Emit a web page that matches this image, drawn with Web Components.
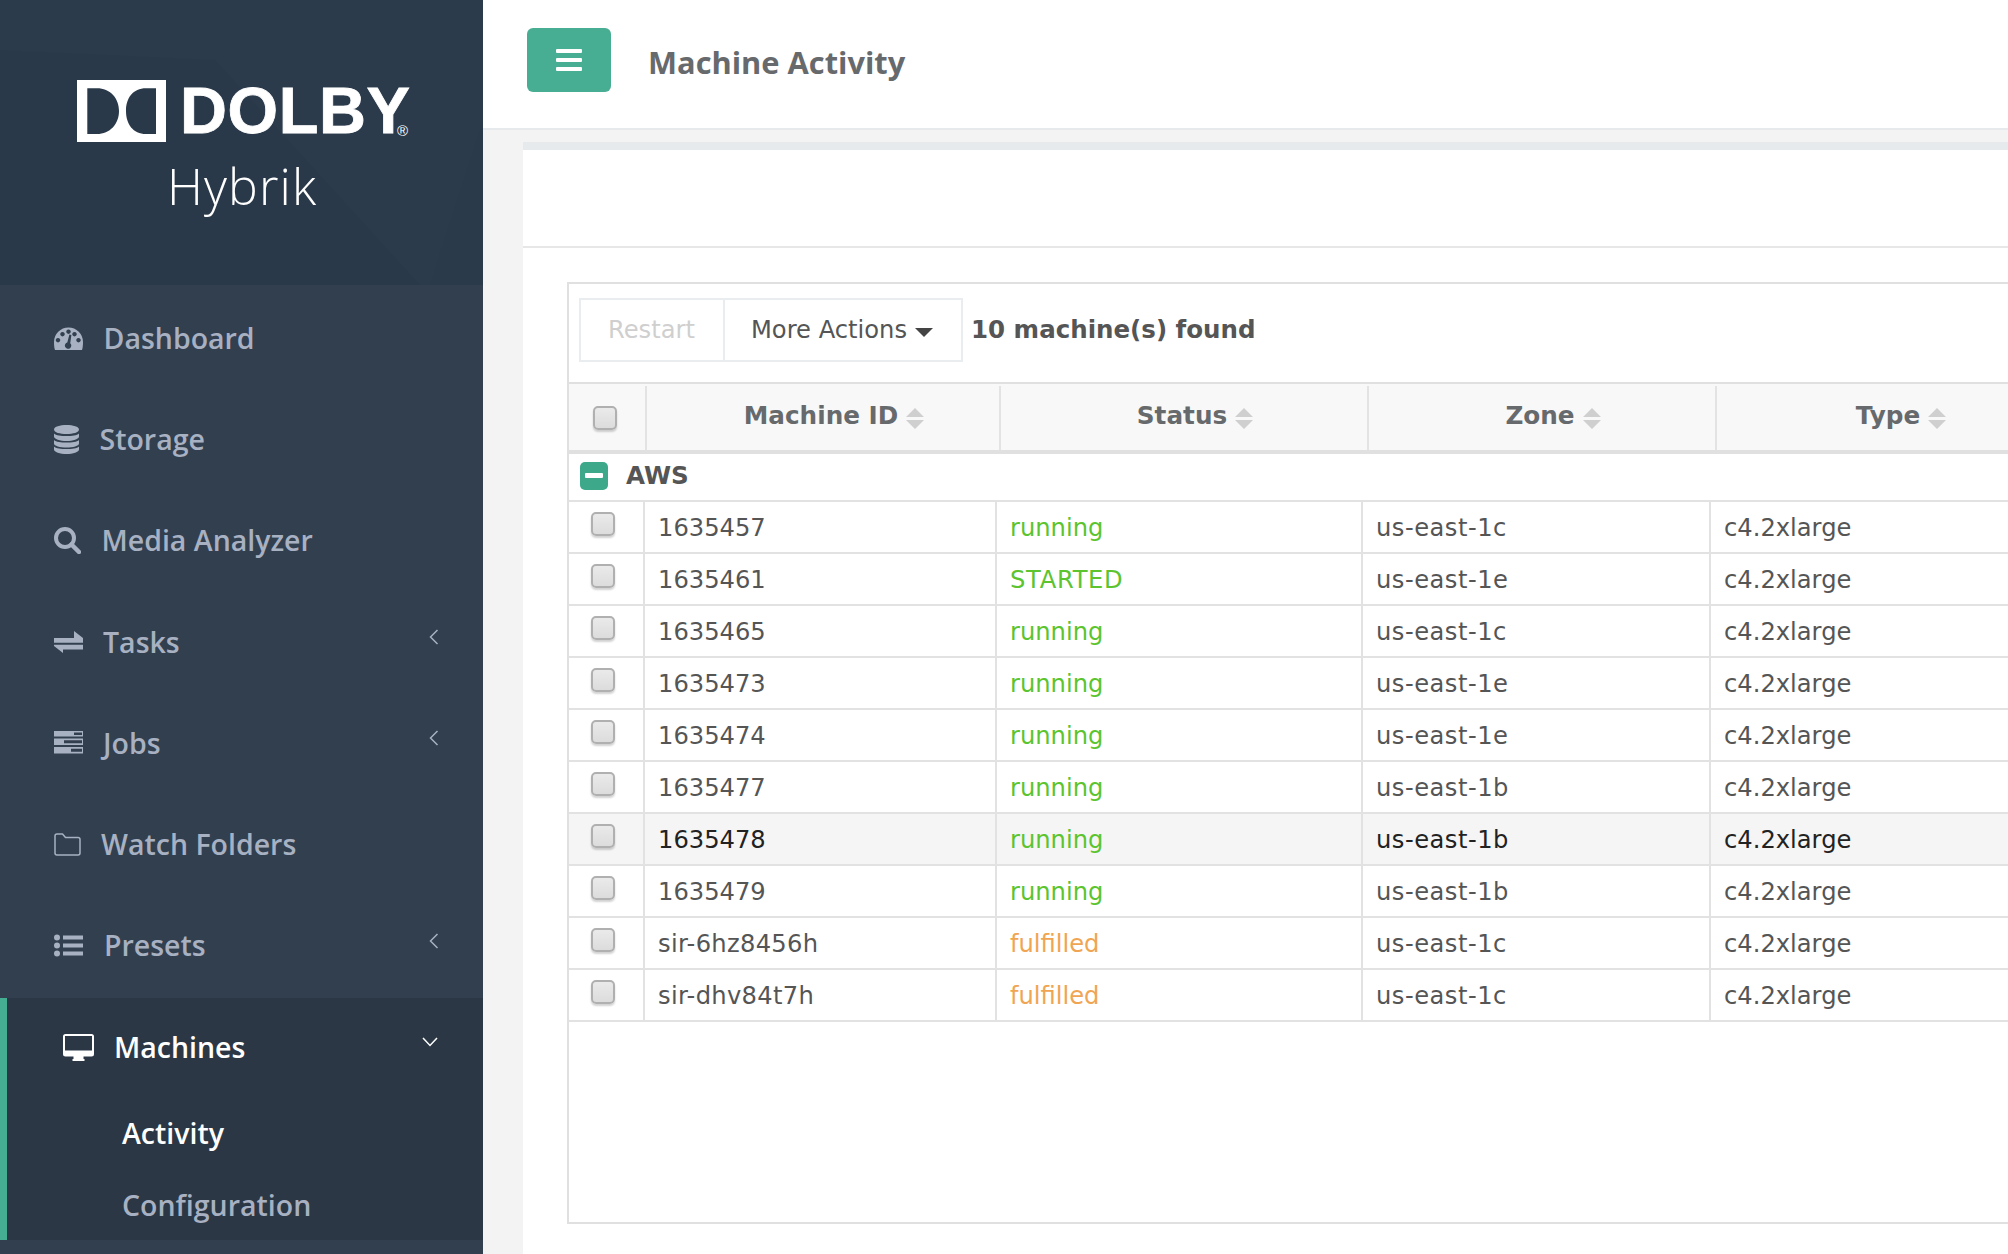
<!DOCTYPE html>
<html>
<head>
<meta charset="utf-8">
<title>Machine Activity</title>
<style>
  html, body { margin: 0; height: 1254px; overflow: hidden; }
  body { display: flex; background: #f3f3f4; font-family: "Open Sans", sans-serif; }
</style>
</head>
<body>
<hy-sidebar>
  <hy-nav-item icon="dashboard" tx="49.500" label="Dashboard"></hy-nav-item>
  <hy-nav-item icon="database" tx="45.500" label="Storage"></hy-nav-item>
  <hy-nav-item icon="search" tx="47.500" label="Media Analyzer"></hy-nav-item>
  <hy-nav-item icon="exchange" tx="49" label="Tasks" chevron></hy-nav-item>
  <hy-nav-item icon="server" tx="49" label="Jobs" chevron></hy-nav-item>
  <hy-nav-item icon="folder" tx="47" label="Watch Folders"></hy-nav-item>
  <hy-nav-item icon="list" tx="50" label="Presets" chevron></hy-nav-item>
  <hy-nav-group label="Machines">
    <hy-sub-item active>Activity</hy-sub-item>
    <hy-sub-item>Configuration</hy-sub-item>
  </hy-nav-group>
</hy-sidebar>
<hy-main>
  <hy-topbar title="Machine Activity"></hy-topbar>
  <hy-panel>
    <hy-machine-table></hy-machine-table>
  </hy-panel>
</hy-main>

<script>
const ICONS = {
  dashboard: '<svg width="29" height="23" viewBox="0 0 29 23"><path fill-rule="evenodd" fill="currentColor" d="M1 23C.3 21 0 18.500 0 15A14.500 14.500 0 0 1 29 15C29 18.500 28.700 21 28 23ZM4 11a2.200 2.200 0 1 0 .01 0ZM8.500 5a2.200 2.200 0 1 0 .01 0ZM14.500 2.500a2.200 2.200 0 1 0 .01 0ZM24.500 11a2.200 2.200 0 1 0 .01 0ZM20.500 5a2.200 2.200 0 1 0 .01 0ZM15.400 7.500L13.300 15.500A3.200 3.200 0 1 0 16.200 16.200L17.400 8Z"/></svg>',
  database: '<svg width="25" height="29" viewBox="0 0 25 29"><path fill="currentColor" d="M0 4.500C0 1.500 6 0 12.500 0S25 1.500 25 4.500 19 9 12.500 9 0 7.500 0 4.500ZM0 8.500V11.500C0 14 6 16 12.500 16S25 14 25 11.500V8.500C23 10.500 18 11 12.500 11S2 10.500 0 8.500ZM0 15V18.500C0 21 6 22.500 12.500 22.500S25 21 25 18.500V15C23 17 18 17.500 12.500 17.500S2 17 0 15ZM0 21.500V24.500C0 27 6 29 12.500 29S25 27 25 24.500V21.500C23 23.500 18 24 12.500 24S2 23.500 0 21.500Z"/></svg>',
  search: '<svg width="27" height="27" viewBox="0 0 27 27"><circle cx="11" cy="11" r="9" fill="none" stroke="currentColor" stroke-width="4"/><path d="M17.500 17.500L25 25" stroke="currentColor" stroke-width="4.500" stroke-linecap="round"/></svg>',
  exchange: '<svg width="29" height="22" viewBox="0 0 29 22"><path fill="currentColor" d="M0 7H20V0L29 7V11.700H0ZM0 13.700H29V18.400H9V22L0 15Z"/></svg>',
  server: '<svg width="29" height="23" viewBox="0 0 29 23"><path fill-rule="evenodd" fill="currentColor" d="M0 0H29V5.500H0ZM20 1.400V4H28V1.400ZM0 7.500H29V14H0ZM10 9.300V12.300H28V9.300ZM0 16H29V22.500H0ZM17 17.700V20.700H28V17.700Z"/></svg>',
  folder: '<svg width="27" height="23" viewBox="0 0 27 23"><path fill="none" stroke="currentColor" stroke-width="1.500" stroke-linejoin="round" d="M3 1H8.500L11.500 4.500H24A2 2 0 0 1 26 6.500V20A2 2 0 0 1 24 22H3A2 2 0 0 1 1 20V3A2 2 0 0 1 3 1Z"/></svg>',
  list: '<svg width="29" height="23" viewBox="0 0 29 23"><g fill="currentColor"><circle cx="3" cy="3.500" r="3"/><circle cx="3" cy="11.500" r="3"/><circle cx="3" cy="19.500" r="3"/><rect x="9" y="1.500" width="20" height="4"/><rect x="9" y="9.500" width="20" height="4"/><rect x="9" y="17.500" width="20" height="4"/></g></svg>',
  desktop: '<svg width="31" height="27" viewBox="0 0 31 27"><path fill-rule="evenodd" fill="currentColor" d="M2.500 0H28.500A2.500 2.500 0 0 1 31 2.500V20A2.500 2.500 0 0 1 28.500 22.500H20.500V25H21.500V27H9.500V25H10.500V22.500H2.500A2.500 2.500 0 0 1 0 20V2.500A2.500 2.500 0 0 1 2.500 0ZM2 2V16.500H29V2Z"/></svg>'
};

class HySidebar extends HTMLElement {
  constructor() {
    super();
    this.attachShadow({ mode: "open" });
    this.shadowRoot.innerHTML = `
<style>
  :host { display: flex; flex-direction: column; width: 483px; height: 1254px; flex: none; background: #323f4f; }
  .brand { position: relative; height: 285px; flex: none; background: #2c3b4c; overflow: hidden; color: #fff; display: flex; flex-direction: column; }
  .bg { position: absolute; inset: 0; }
  .logo { position: relative; display: flex; align-items: center; margin: 80px 0 0 77px; height: 62px; }
  .word { font: 700 65px/62px "Liberation Sans", sans-serif; margin-left: 14px; letter-spacing: .6px; -webkit-text-stroke: .8px #fff; }
  .reg { position: absolute; left: 320px; top: 43px; font: 400 15px/16px "Liberation Sans", sans-serif; }
  .sub { position: relative; font: 350 50px/60px "Open Sans", sans-serif; letter-spacing: 1.100px; margin: 14px 0 0 167px; }
  nav { display: flex; flex-direction: column; }
</style>
<div class="brand">
  <svg class="bg" width="483" height="285" viewBox="0 0 483 285"><path fill="#29384a" d="M0 50L215 60L420 285H0Z" opacity=".45"/><path fill="#2a3949" d="M483 120L430 285H483Z" opacity=".5"/></svg>
  <div class="logo">
    <svg width="89" height="62" viewBox="0 0 89 62"><path fill="#fff" fill-rule="evenodd" d="M0 0H89V62H0ZM10.300 8.300V54H20C33 54 42 44 42 31S33 8.300 20 8.300ZM79 8.300H69C56 8.300 49 18 49 31S56 54 69 54H79Z"/></svg>
    <span class="word">DOLBY</span>
    <span class="reg">®</span>
  </div>
  <div class="sub">Hybrik</div>
</div>
<nav><slot></slot></nav>`;
  }
}

class HyNavItem extends HTMLElement {
  constructor() {
    super();
    this.attachShadow({ mode: "open" });
    const icon = ICONS[this.getAttribute("icon")];
    const chev = this.hasAttribute("chevron")
      ? '<svg class="chev" width="10" height="16" viewBox="0 0 10 16"><path d="M8.500 1L1.500 8L8.500 15" fill="none" stroke="currentColor" stroke-width="1.500"/></svg>'
      : "";
    this.shadowRoot.innerHTML = `
<style>
  :host { display: flex; align-items: center; height: 101.200px; box-sizing: border-box; padding: 5px 44px 0 54px; color: #a7b1c2; font: 600 28.500px/36px "Open Sans", sans-serif; }
  .ic { width: ${this.getAttribute("tx")}px; flex: none; display: flex; align-items: center; }
  .chev { margin-left: auto; margin-bottom: 9px; }
</style>
<span class="ic">${icon}</span><span>${this.getAttribute("label")}</span>${chev}`;
  }
}

class HyNavGroup extends HTMLElement {
  constructor() {
    super();
    this.attachShadow({ mode: "open" });
    this.shadowRoot.innerHTML = `
<style>
  :host { display: block; height: 242px; margin-top: 5px; box-sizing: border-box; background: #2b3745; border-left: 7px solid #45ae92; color: #fff; font: 600 28.500px/36px "Open Sans", sans-serif; }
  .head { display: flex; align-items: center; height: 99px; box-sizing: border-box; padding: 0 45px 1px 56px; }
  .ic { width: 51px; flex: none; display: flex; }
  .chev { margin-left: auto; margin-bottom: 10px; }
</style>
<div class="head">
  <span class="ic">${ICONS.desktop}</span><span>${this.getAttribute("label")}</span>
  <svg class="chev" width="16" height="10" viewBox="0 0 16 10"><path d="M1 1L8 8.500L15 1" fill="none" stroke="currentColor" stroke-width="1.500"/></svg>
</div>
<slot></slot>`;
  }
}

class HySubItem extends HTMLElement {
  constructor() {
    super();
    this.attachShadow({ mode: "open" });
    this.shadowRoot.innerHTML = `
<style>
  :host { display: flex; align-items: center; height: 71.500px; padding-left: 115px; color: #a7b1c2; }
  :host([active]) { color: #fff; }
</style>
<slot></slot>`;
  }
}

class HyMain extends HTMLElement {
  constructor() {
    super();
    this.attachShadow({ mode: "open" });
    this.shadowRoot.innerHTML = `
<style>
  :host { display: flex; flex-direction: column; flex: 1; min-width: 0; height: 1254px; overflow: hidden; }
</style>
<slot></slot>`;
  }
}

class HyTopbar extends HTMLElement {
  constructor() {
    super();
    this.attachShadow({ mode: "open" });
    this.shadowRoot.innerHTML = `
<style>
  :host { display: flex; align-items: center; height: 130px; box-sizing: border-box; flex: none; background: #fff; border-bottom: 2px solid #e7eaec; padding: 0 0 8px 44px; }
  .toggle { width: 84px; height: 64px; border-radius: 6px; background: #48ae93; display: flex; flex-direction: column; align-items: center; justify-content: center; gap: 5px; }
  .toggle i { display: block; width: 26px; height: 4px; border-radius: 1px; background: #fff; }
  h2 { margin: 3px 0 0 37px; color: #676a6c; font: 700 30.800px/40px "Open Sans", sans-serif; }
</style>
<div class="toggle"><i></i><i></i><i></i></div>
<h2>${this.getAttribute("title")}</h2>`;
  }
}

class HyPanel extends HTMLElement {
  constructor() {
    super();
    this.attachShadow({ mode: "open" });
    this.shadowRoot.innerHTML = `
<style>
  :host { display: block; flex: 1; margin: 12px 0 0 40px; background: #fff; border-top: 8px solid #e7eaec; }
  .head { height: 96px; border-bottom: 2px solid #e7e7e7; }
  .body { padding: 34px 0 0 44px; }
</style>
<div class="head"></div>
<div class="body"><slot></slot></div>`;
  }
}

class HyCheckbox extends HTMLElement {
  constructor() {
    super();
    this.attachShadow({ mode: "open" });
    this.shadowRoot.innerHTML = `
<style>
  :host { display: block; width: 24px; height: 24px; box-sizing: border-box; border: 2px solid #b0b0b0; border-radius: 5px; background: linear-gradient(#eaeaea, #dcdcdc); box-shadow: 0 2px 2px rgba(0,0,0,.18); }
</style>`;
  }
}

class HySortHead extends HTMLElement {
  constructor() {
    super();
    this.attachShadow({ mode: "open" });
    this.shadowRoot.innerHTML = `
<style>
  :host { display: flex; align-items: center; justify-content: center; box-sizing: border-box; margin-top: 2px; padding: 0 0 4px 22px; border-right: 2px solid #e3e3e3; }
  svg { margin-left: 8px; margin-top: 4px; }
</style>
<slot></slot>
<svg width="18" height="21" viewBox="0 0 18 21"><path fill="#cfcfcf" d="M9 0L18 9H0ZM0 12H18L9 21Z"/></svg>`;
  }
}

class HyMachineRow extends HTMLElement {
  constructor() {
    super();
    this.attachShadow({ mode: "open" });
    const status = this.getAttribute("status");
    const mid = this.getAttribute("mid");
    const tone = status === "fulfilled" ? "#f0a552" : "#5bc42f";
    // Verdana runs a bit wider than DejaVu on these
    const statusTrack = status === "STARTED" ? ".7px" : "0";
    const midTrack = mid.startsWith("sir") ? ".3px" : "0";
    this.shadowRoot.innerHTML = `
<style>
  :host { display: grid; grid-template-columns: 76px 352px 366px 348px 600px; height: 52px; box-sizing: border-box; border-bottom: 2px solid #e2e2e2; color: #555; }
  :host([hover]) { background: #f5f5f5; color: #222; }
  .c { display: flex; align-items: center; padding: 2px 0 0 13px; box-sizing: border-box; border-right: 2px solid #e2e2e2; line-height: 48px; }
  .chk { padding: 10px 0 0 22px; align-items: flex-start; }
  .status { color: ${tone}; letter-spacing: ${statusTrack}; }
  .mid { letter-spacing: ${midTrack}; }
  .zone { letter-spacing: .5px; }
</style>
<div class="c chk"><hy-checkbox></hy-checkbox></div>
<div class="c mid">${mid}</div>
<div class="c status">${status}</div>
<div class="c zone">${this.getAttribute("zone")}</div>
<div class="c" style="border:0">${this.getAttribute("type")}</div>`;
  }
}

class HyMachineTable extends HTMLElement {
  constructor() {
    super();
    this.attachShadow({ mode: "open" });
    const machines = [
      ["1635457", "running", "us-east-1c"],
      ["1635461", "STARTED", "us-east-1e"],
      ["1635465", "running", "us-east-1c"],
      ["1635473", "running", "us-east-1e"],
      ["1635474", "running", "us-east-1e"],
      ["1635477", "running", "us-east-1b"],
      ["1635478", "running", "us-east-1b", true],
      ["1635479", "running", "us-east-1b"],
      ["sir-6hz8456h", "fulfilled", "us-east-1c"],
      ["sir-dhv84t7h", "fulfilled", "us-east-1c"]
    ];
    const rows = machines.map(m =>
      `<hy-machine-row mid="${m[0]}" status="${m[1]}" zone="${m[2]}" type="c4.2xlarge"${m[3] ? " hover" : ""}></hy-machine-row>`
    ).join("");
    this.shadowRoot.innerHTML = `
<style>
  :host { display: block; width: 1800px; height: 942px; box-sizing: border-box; border: 2px solid #e0e0e0; font: 400 24.200px/32px "DejaVu Sans", Verdana, sans-serif; color: #555; }
  .bar { display: flex; align-items: center; height: 98px; box-sizing: border-box; padding: 14px 0 20px 10px; }
  .group { display: flex; height: 64px; box-sizing: border-box; border: 2px solid #eaedef; }
  .group div { display: flex; align-items: center; box-sizing: border-box; }
  .restart { width: 144px; padding-left: 27px; color: #cfcfcf; border-right: 2px solid #eaedef; }
  .more { width: 236px; padding-left: 26px; color: #555; }
  .caret { width: 0; height: 0; margin: 4px 0 0 8px; border: 9px solid transparent; border-top-color: #444; border-bottom: 0; }
  .found { margin-left: 8px; font-size: 24.500px; font-weight: 700; color: #555; }
  .head { display: grid; grid-template-columns: 78px 354px 368px 348px 348px 300px; height: 72px; box-sizing: border-box; border-top: 2px solid #e0e0e0; border-bottom: 4px solid #e0e0e0; background: #f8f8f8; font-size: 24.700px; font-weight: 700; color: #676a6c; }
  .hchk { padding: 20px 0 0 24px; margin-top: 2px; border-right: 2px solid #e3e3e3; box-sizing: border-box; }
  .aws { display: flex; align-items: center; height: 48px; box-sizing: border-box; border-bottom: 2px solid #e2e2e2; padding: 0 0 3px 11px; font-size: 24.600px; font-weight: 700; color: #555; }
  .minus { width: 28px; height: 28px; border-radius: 5px; background: #3da88a; display: flex; align-items: center; justify-content: center; margin-right: 18px; }
  .minus i { width: 18px; height: 5px; border-radius: 1px; background: #fff; }
</style>
<div class="bar">
  <div class="group">
    <div class="restart">Restart</div>
    <div class="more">More Actions<span class="caret"></span></div>
  </div>
  <div class="found">10 machine(s) found</div>
</div>
<div class="head">
  <div class="hchk"><hy-checkbox></hy-checkbox></div>
  <hy-sort-head>Machine ID</hy-sort-head>
  <hy-sort-head>Status</hy-sort-head>
  <hy-sort-head>Zone</hy-sort-head>
  <hy-sort-head>Type</hy-sort-head>
  <div></div>
</div>
<div class="aws"><span class="minus"><i></i></span>AWS</div>
${rows}`;
  }
}

customElements.define("hy-sidebar", HySidebar);
customElements.define("hy-nav-item", HyNavItem);
customElements.define("hy-nav-group", HyNavGroup);
customElements.define("hy-sub-item", HySubItem);
customElements.define("hy-main", HyMain);
customElements.define("hy-topbar", HyTopbar);
customElements.define("hy-panel", HyPanel);
customElements.define("hy-checkbox", HyCheckbox);
customElements.define("hy-sort-head", HySortHead);
customElements.define("hy-machine-row", HyMachineRow);
customElements.define("hy-machine-table", HyMachineTable);
</script>
</body>
</html>
